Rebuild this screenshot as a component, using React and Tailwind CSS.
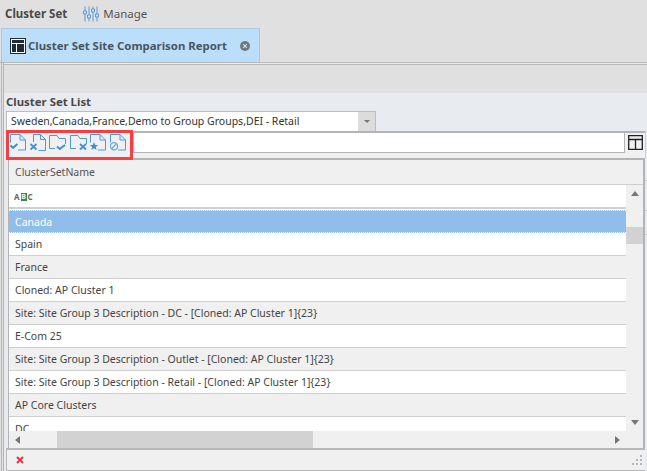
import React from "react";

const font = { fontFamily: '"Noto Sans","Open Sans",sans-serif' };

function Doc({ badge }) {
  return (
    <svg width="16" height="17" viewBox="0 0 16 17" className="shrink-0">
      <path d={badge === "x" ? "M3.5 8V0.5H10.5L15.5 5.5V16.5H8.5M10.5 0.5V5.5H15.5" : "M0.5 8.5V0.5H10L15.5 6V16H8M10 0.5V6H15.5"} fill="none" stroke="#4e9ad9" strokeWidth="1" />
      {badge === "check" && <path d="M0.5 11.5L3 13.8L7.5 10" fill="none" stroke="#3f8fd4" strokeWidth="2" />}
      {badge === "x" && <path d="M0.5 10L6.5 15.5M6.5 10L0.5 15.5" fill="none" stroke="#4590d2" strokeWidth="1.8" />}
      {badge === "star" && <path d="M4 8L5.2 11H8.2L5.8 13L6.7 16L4 14.2L1.3 16L2.2 13L-0.2 11H2.8Z" fill="#3f8fd4" />}
      {badge === "no" && (
        <g fill="none" stroke="#6aa6dd" strokeWidth="1.3">
          <circle cx="4" cy="12.3" r="3.6" fill="#f0f0f0" />
          <path d="M1.6 15L6.4 9.6" />
        </g>
      )}
    </svg>
  );
}

function Folder({ badge }) {
  return (
    <svg width="17" height="17" viewBox="0 0 17 17" className="shrink-0">
      <path d="M6 14.5H0.5V1.5H8L10 4.5H16.5V10" fill="none" stroke="#4e9ad9" strokeWidth="1" />
      {badge === "check" && <path d="M8 12.5L10.8 15L16 11" fill="none" stroke="#3f8fd4" strokeWidth="2" />}
      {badge === "x" && <path d="M10 10L16 15.5M16 10L10 15.5" fill="none" stroke="#4590d2" strokeWidth="1.8" />}
    </svg>
  );
}

const rows = [
  "Spain",
  "France",
  "Cloned: AP Cluster 1",
  "Site: Site Group 3 Description - DC - [Cloned: AP Cluster 1]{23}",
  "E-Com 25",
  "Site: Site Group 3 Description - Outlet - [Cloned: AP Cluster 1]{23}",
  "Site: Site Group 3 Description - Retail - [Cloned: AP Cluster 1]{23}",
  "AP Core Clusters",
];

export default function App() {
  return (
    <div className="relative w-[647px] h-[471px] overflow-hidden bg-[#e0e0e0] text-[#444] text-[10.5px]" style={font}>
      <div className="h-[28px] flex items-center pl-[5px]">
        <span className="font-bold text-[11.5px] text-[#4a4a4a]">Cluster Set</span>
        <svg width="16" height="16" viewBox="0 0 16 16" className="ml-[16px]" fill="none" stroke="#5b9bd5" strokeWidth="1">
          <path d="M2 0.5V15.5M6 0.5V15.5M10 0.5V15.5M14 0.5V15.5" />
          <path d="M0.5 5H3.5V8H0.5ZM4.5 9H7.5V12H4.5ZM8.5 3H11.5V6H8.5ZM12.5 8H15.5V11H12.5Z" fill="#e0e0e0" />
        </svg>
        <span className="ml-[4px] text-[11.5px] text-[#555]">Manage</span>
      </div>
      <div className="flex ml-[1px] w-[259px] h-[34px] items-center bg-[#bbdefb] border border-b-0 border-[#a5c9e6] pl-[8px]">
        <svg width="16" height="16" viewBox="0 0 16 16" className="shrink-0">
          <rect x="0.5" y="0.5" width="15" height="15" fill="#fff" stroke="#1f2a3a" />
          <rect x="2" y="2" width="12" height="3" fill="#1f2a3a" />
          <rect x="2" y="6" width="4" height="8" fill="#1f2a3a" />
          <rect x="7" y="6" width="7" height="8" fill="#1f2a3a" />
        </svg>
        <span className="ml-[2px] font-bold text-[11.4px] text-[#4b5560] whitespace-nowrap">Cluster Set Site Comparison Report</span>
        <svg width="10" height="10" viewBox="0 0 10 10" className="ml-[13px] shrink-0">
          <circle cx="5" cy="5" r="5" fill="#6e7780" />
          <path d="M3.2 3.2L6.8 6.8M6.8 3.2L3.2 6.8" stroke="#d5dde4" strokeWidth="1.2" />
        </svg>
      </div>
      <div className="h-[409px] border-t border-[#b8b8b8] pl-[1px]">
        <div className="h-full border-l border-[#b8b8b8] pl-[1px]">
          <div className="h-full flex flex-col border-l border-[#b4b4b4]">
            <div className="h-[30px] pt-[1px] shrink-0 bg-[#ececec]">
              <div className="h-full border-t border-[#b8b8b8] bg-[#e0e0e0]" />
            </div>
            <div className="flex-1 min-h-0 flex flex-col bg-[#e8ebf0]">
              <div className="h-[18px] shrink-0 flex items-center pl-[2px]">
                <span className="font-bold text-[11.4px] leading-[14px] text-[#4a4a4a]">Cluster Set List</span>
              </div>
              <div className="h-[20px] w-[370px] ml-[2px] shrink-0 flex bg-white border border-b-0 border-[#bdbdbd]">
                <span className="flex-1 pl-[4px] text-[10.5px] leading-[19px] text-[#333] whitespace-nowrap">Sweden,Canada,France,Demo to Group Groups,DEI - Retail</span>
                <span className="w-[17px] bg-[#dcdcdc] flex items-center justify-center">
                  <span className="w-0 h-0 border-x-[3px] border-x-transparent border-t-[3px] border-t-[#777]" />
                </span>
              </div>
              <div className="h-[27px] ml-[2px] mr-[1px] shrink-0 flex items-stretch bg-[#f0f0f0] border-t-2 border-r border-[#b4b4b4] border-r-[#d0d0d0]">
                <div className="flex items-start gap-[3.5px] pl-[4px] pt-[1px] w-[127px] shrink-0">
                  <Doc badge="check" />
                  <Doc badge="x" />
                  <Folder badge="check" />
                  <Folder badge="x" />
                  <Doc badge="star" />
                  <Doc badge="no" />
                </div>
                <div className="w-[492px] h-[20px] bg-white border border-t-0 border-[#b4b4b4] shrink-0" />
                <div className="flex-1 flex items-start justify-center pt-[2px]">
                  <svg width="15" height="15" viewBox="0 0 15 15" fill="none" stroke="#222" strokeWidth="1.3">
                    <path d="M0.7 0.7H14.3V14.3H0.7ZM0.7 4.5H14.3M7.5 4.5V14.3" />
                  </svg>
                </div>
              </div>
              <div className="flex-1 min-h-0 ml-[4px] mr-[2px] flex flex-col border-l border-r-2 border-[#b4b4b4] border-t-2 bg-[#f0f0f0]">
                <div className="h-[25px] shrink-0 border-b border-[#cfcfcf] pl-[6px] pt-[1px] flex items-center text-[#555]">ClusterSetName</div>
                <div className="flex-1 min-h-0 flex">
                  <div className="flex-1 min-w-0 flex flex-col overflow-hidden bg-white">
                    <div className="h-[24px] shrink-0 bg-white border-b-2 border-[#d0d0d0] pl-[5px] flex items-center gap-[1px] pt-[1px]">
                      <span className="text-[8px] font-bold text-[#666] leading-[8px]">A</span>
                      <span className="w-[6px] h-[8px] bg-[#2e8b57] text-white text-[7px] leading-[8px] text-center font-bold">B</span>
                      <span className="text-[8px] font-bold text-[#666] leading-[8px]">C</span>
                    </div>
                    <div className="h-[23px] mt-[1px] shrink-0 bg-[#91bdea] border-y border-dotted border-white pl-[6px] pt-[2px] flex items-center text-white">Canada</div>
                    <div className="flex-1 min-h-0 overflow-hidden">
                      {rows.map((r, i) => (
                        <div key={r} className={`h-[23px] border-b border-[#cfcfcf] pl-[6px] pt-[2px] flex items-center whitespace-nowrap text-[#444] ${i % 2 === 0 ? "bg-white" : "bg-[#f0f0f0]"}`}>{r}</div>
                      ))}
                      <div className="h-[23px] bg-white pl-[6px] pt-[2px] flex items-center text-[#444]">DC</div>
                    </div>
                    <div className="h-[17px] shrink-0 flex items-center bg-[#f0f0f0]">
                      <span className="ml-[6px] w-0 h-0 border-y-[4px] border-y-transparent border-r-[5px] border-r-[#777]" />
                      <div className="ml-[37px] w-[256px] h-full bg-[#d2d2d2]" />
                      <span className="ml-auto mr-[6px] w-0 h-0 border-y-[4px] border-y-transparent border-l-[5px] border-l-[#777]" />
                    </div>
                  </div>
                  <div className="w-[17px] shrink-0 bg-[#f0f0f0] flex flex-col items-center">
                    <span className="mt-[6px] w-0 h-0 border-x-[4px] border-x-transparent border-b-[5px] border-b-[#777]" />
                    <div className="mt-[31px] w-full h-[17px] bg-[#d2d2d2]" />
                    <span className="mt-auto mb-[23px] w-0 h-0 border-x-[4px] border-x-transparent border-t-[5px] border-t-[#777]" />
                  </div>
                </div>
              </div>
              <div className="h-[23px] shrink-0 ml-[2px] mr-[2px] bg-[#f0f0f0] border-l border-t-2 border-b border-[#b8b8b8] flex items-center justify-between pl-[9px] pr-[3px]">
                <svg width="8" height="8" viewBox="0 0 8 8"><path d="M1 1L7 7M7 1L1 7" stroke="#e8344a" strokeWidth="2" /></svg>
                <svg width="10" height="10" viewBox="0 0 10 10" fill="#b5b5b5">
                  <rect x="8" y="0" width="2" height="2" /><rect x="4" y="4" width="2" height="2" /><rect x="8" y="4" width="2" height="2" />
                  <rect x="0" y="8" width="2" height="2" /><rect x="4" y="8" width="2" height="2" /><rect x="8" y="8" width="2" height="2" />
                </svg>
              </div>
            </div>
          </div>
        </div>
      </div>
      <div className="absolute left-[6px] top-[130px] w-[127px] h-[30px] border-[3px] border-[#f44044]" />
      <div className="absolute left-[645px] top-[180px] w-[2px] h-[1px] bg-[#c8c8c8]" />
      <div className="absolute left-[645px] top-[210px] w-[2px] h-[1px] bg-[#c8c8c8]" />
      <div className="absolute left-[645px] top-[234px] w-[2px] h-[1px] bg-[#c8c8c8]" />
    </div>
  );
}
